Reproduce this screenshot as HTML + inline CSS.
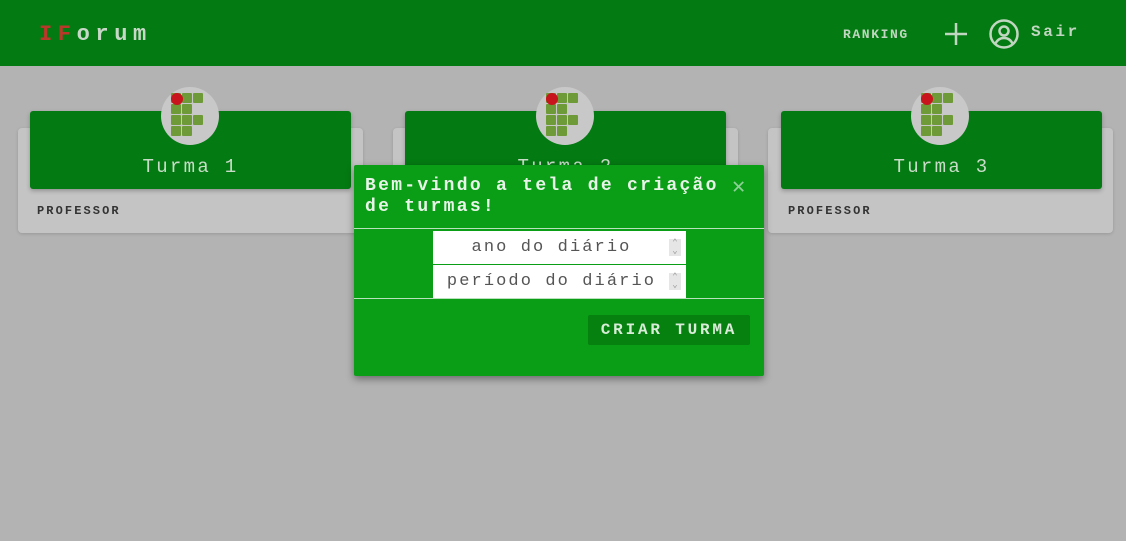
<!DOCTYPE html>
<html><head><meta charset="utf-8"><style>
*{box-sizing:border-box;margin:0;padding:0}
body{width:1126px;height:541px;background:#b3b3b3;font-family:"Liberation Mono","DejaVu Sans Mono",monospace;position:relative;overflow:hidden}
.hdr{position:absolute;left:0;top:0;width:1126px;height:66px;background:#047a12}
.logo{position:absolute;left:39px;top:22px;font-size:22px;font-weight:bold;color:#c8d8c8;letter-spacing:5.6px}
.logo span{color:#b8382a}
.rk{position:absolute;left:843px;top:27px;font-size:13px;font-weight:bold;color:#c0d6c0;letter-spacing:1.6px}
.sair{position:absolute;left:1031px;top:23px;font-size:16px;font-weight:bold;color:#c0d6c0;letter-spacing:2.6px}
.card{position:absolute;top:128px;width:345px;height:105px;background:#c4c4c4;border-radius:4px;box-shadow:0 1px 3px rgba(0,0,0,.15)}
.ch{position:absolute;top:111px;width:321px;height:78px;background:#047a12;border-radius:3px;box-shadow:0 2px 4px rgba(0,0,0,.25);color:#c8dcc8;font-size:19px;text-align:center;padding-top:45px;letter-spacing:2.3px}
.prof{position:absolute;top:204px;font-size:12px;font-weight:bold;color:#333;letter-spacing:2.1px}
.circ{position:absolute;top:87px;width:58px;height:58px;border-radius:50%;background:#c8c8c8}
.modal{position:absolute;left:354px;top:165px;width:410px;height:211px;background:#0a9e17;box-shadow:0 3px 8px rgba(0,0,0,.4);border-radius:2px}
.mt{position:absolute;left:11px;top:11px;font-size:18px;font-weight:bold;color:#e8f4e8;line-height:21px;width:365px;letter-spacing:2.3px}
.x{position:absolute;left:378px;top:9px;color:#8fd098;font-size:22px}
.hl{position:absolute;left:0;width:410px;height:1px;background:#b9e2bc}
.inp{position:absolute;left:79px;width:253px;height:33px;background:#fff;color:#555;font-size:17px;text-align:center;line-height:33px;padding-right:16px;letter-spacing:2.1px;white-space:nowrap}
.sp{position:absolute;right:5px;top:8px;width:12px;height:17px;background:#e6e6e6;font-size:9px;line-height:8px;color:#999;text-align:center;letter-spacing:0}
.btn{position:absolute;left:234px;top:150px;width:162px;height:30px;background:#06800f;color:#d8ecd8;font-size:16px;font-weight:bold;text-align:center;line-height:30px;border-radius:2px;letter-spacing:2.8px}
</style></head><body>
<div class="hdr">
<div class="logo"><span>IF</span>orum</div>
<div class="rk">RANKING</div>
<svg style="position:absolute;left:943px;top:21px" width="26" height="26" viewBox="0 0 26 26"><path d="M13 2v22M2 13h22" stroke="#c0d6c0" stroke-width="2.5"/></svg>
<svg style="position:absolute;left:988px;top:18px" width="32" height="32" viewBox="0 0 32 32"><circle cx="16" cy="16" r="13.5" fill="none" stroke="#c0d6c0" stroke-width="2.5"/><circle cx="16" cy="13" r="4.5" fill="none" stroke="#c0d6c0" stroke-width="2.5"/><path d="M7.5 25.5c2-4 5-5.5 8.5-5.5s6.5 1.5 8.5 5.5" fill="none" stroke="#c0d6c0" stroke-width="2.5"/></svg>
<div class="sair">Sair</div>
</div>

<div class="card" style="left:18px"></div>
<div class="card" style="left:393px"></div>
<div class="card" style="left:768px"></div>
<div class="ch" style="left:30px">Turma 1</div>
<div class="ch" style="left:405px">Turma 2</div>
<div class="ch" style="left:781px">Turma 3</div>
<div class="prof" style="left:37px">PROFESSOR</div>
<div class="prof" style="left:788px">PROFESSOR</div>

<svg width="0" height="0" style="position:absolute"><defs><g id="lg"><rect x="10" y="6" width="10" height="10" rx="1" fill="#6e9a38"/><rect x="21" y="6" width="10" height="10" rx="1" fill="#6e9a38"/><rect x="10" y="17" width="10" height="10" rx="1" fill="#6e9a38"/><rect x="21" y="17" width="10" height="10" rx="1" fill="#6e9a38"/><rect x="10" y="28" width="10" height="10" rx="1" fill="#6e9a38"/><rect x="21" y="28" width="10" height="10" rx="1" fill="#6e9a38"/><rect x="32" y="28" width="10" height="10" rx="1" fill="#6e9a38"/><rect x="32" y="6" width="10" height="10" rx="1" fill="#6e9a38"/><rect x="10" y="39" width="10" height="10" rx="1" fill="#6e9a38"/><rect x="21" y="39" width="10" height="10" rx="1" fill="#6e9a38"/><circle cx="16" cy="12" r="6" fill="#c8141c"/></g></defs></svg>
<div class="circ" style="left:161px"><svg width="58" height="58"><use href="#lg"/></svg></div>
<div class="circ" style="left:536px"><svg width="58" height="58"><use href="#lg"/></svg></div>
<div class="circ" style="left:911px"><svg width="58" height="58"><use href="#lg"/></svg></div>

<div class="modal">
<div class="mt">Bem-vindo a tela de criação de turmas!</div>
<div class="x">✕</div>
<div class="hl" style="top:63px"></div>
<div class="inp" style="top:66px">ano do diário<div class="sp">⌃<br>⌄</div></div>
<div class="inp" style="top:100px">período do diário<div class="sp">⌃<br>⌄</div></div>
<div class="hl" style="top:133px"></div>
<div class="btn">CRIAR TURMA</div>
</div>
</body></html>
